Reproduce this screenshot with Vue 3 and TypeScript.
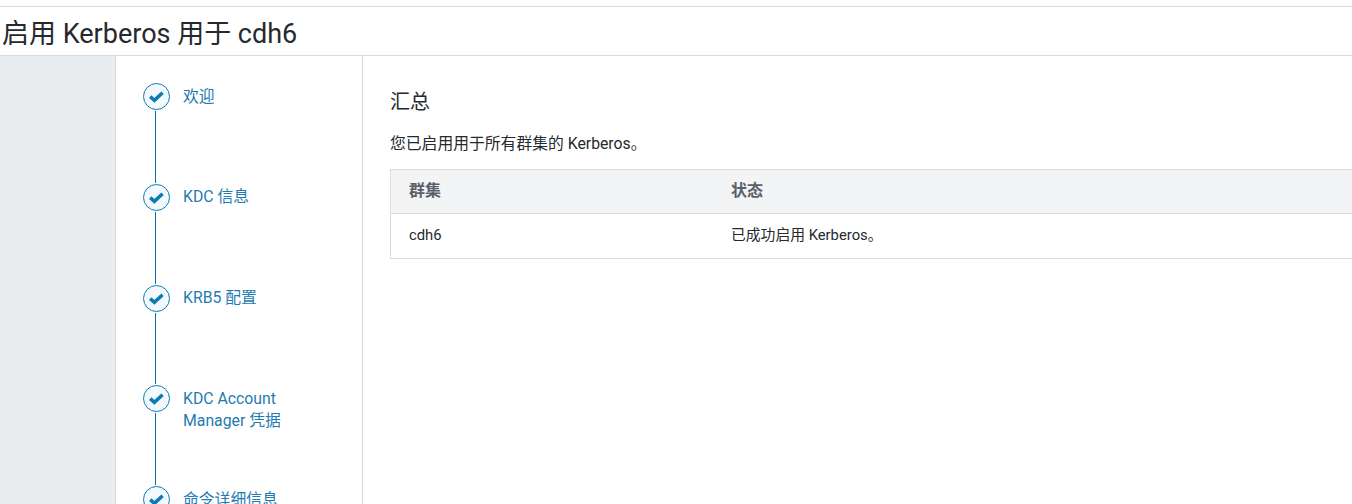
<script setup lang="ts">
const steps: string[][] = [
  ['欢迎'],
  ['KDC 信息'],
  ['KRB5 配置'],
  ['KDC Account', 'Manager 凭据'],
  ['命令详细信息'],
]
</script>

<template>
  <div class="page">
    <header class="head">
      <h1 class="title">启用 Kerberos 用于 cdh6</h1>
    </header>
    <div class="body">
      <aside class="rail"></aside>
      <nav class="steps">
        <div v-for="(s, i) in steps" :key="i" class="step">
          <div class="marker">
            <span class="circle">
              <svg width="17" height="17" viewBox="0 0 17 17">
                <path d="M2.2 8.6 L6.4 12.4 L14.6 4.8" fill="none" stroke="#0b7db5" stroke-width="3.6" />
              </svg>
            </span>
            <span class="line"></span>
          </div>
          <div class="label">
            <div v-for="l in s" :key="l">{{ l }}</div>
          </div>
        </div>
      </nav>
      <main class="main">
        <h2 class="sub">汇总</h2>
        <p class="msg">您已启用用于所有群集的 Kerberos。</p>
        <div class="table">
          <div class="row th">
            <div class="c1">群集</div>
            <div>状态</div>
          </div>
          <div class="row td">
            <div class="c1">cdh6</div>
            <div>已成功启用 Kerberos。</div>
          </div>
        </div>
      </main>
    </div>
  </div>
</template>

<style>
html, body { margin: 0; background: #fff; overflow: hidden; }
</style>

<style scoped>
.page {
  width: 1352px;
  height: 504px;
  overflow: hidden;
  display: flex;
  flex-direction: column;
  font-family: Roboto, "Noto Sans CJK SC", sans-serif;
  color: #252a2e;
  background: #fff;
}
.head {
  margin-top: 6px;
  height: 48px;
  border-top: 1px solid #dcdcdc;
  border-bottom: 1px solid #dcdcdc;
  display: flex;
  align-items: center;
  padding-left: 2px;
  flex: none;
}
.title {
  margin: 6px 0 0;
  font-size: 27px;
  font-weight: 400;
  line-height: 36px;
}
.body { flex: 1; display: flex; min-height: 0; }
.rail {
  width: 115px;
  flex: none;
  background: #e9edf0;
  border-right: 1px solid #d6d6d6;
}
.steps {
  flex: none;
  border-right: 1px solid #d6d6d6;
  padding: 27px 0 0 27px;
  width: 219px;
}
.step { height: 100.75px; display: flex; }
.marker {
  width: 27px;
  display: flex;
  flex-direction: column;
  align-items: center;
  flex: none;
}
.circle {
  width: 27px;
  height: 27px;
  box-sizing: border-box;
  border: 1px solid #0b7db5;
  border-radius: 50%;
  background: #f4f9fd;
  display: flex;
  align-items: center;
  justify-content: center;
  flex: none;
}
.line {
  flex: 1;
  width: 1px;
  margin: 1px 2px 1px 0;
  background: #0a6f9f;
}
.label {
  margin-left: 13px;
  font-size: 15.8px;
  line-height: 22px;
  color: #1f7bb0;
  padding-top: 2.6px;
}
.main { flex: 1; padding: 0 0 0 27px; min-width: 0; }
.sub {
  margin: 34px 0 0;
  font-size: 20px;
  font-weight: 400;
  line-height: 24px;
}
.msg {
  margin: 19px 0 0;
  font-size: 15.8px;
  line-height: 22px;
}
.table {
  margin-top: 14px;
  border: 1px solid #dcdcdc;
  border-right: none;
  font-size: 14.8px;
}
.row { display: flex; align-items: center; padding: 0 0 2px 18px; box-sizing: border-box; line-height: 20px; }
.c1 { width: 322px; flex: none; }
.th {
  height: 44px;
  background: #f3f4f6;
  border-bottom: 1px solid #dcdcdc;
  font-size: 16px;
  font-weight: 700;
  color: #5a6068;
}
.td { height: 44px; }
</style>
